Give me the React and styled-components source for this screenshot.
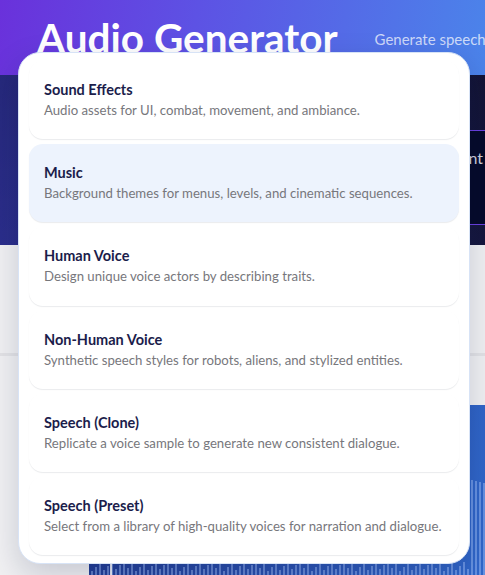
import React from 'react';
import styled, { createGlobalStyle } from 'styled-components';

const GlobalStyle = createGlobalStyle`
  html, body {
    margin: 0;
    padding: 0;
    background: #f1f1f3;
    font-family: Lato, "Open Sans", sans-serif;
  }
`;

const Page = styled.div`
  position: relative;
  width: 485px;
  height: 575px;
  overflow: hidden;
  background: #f1f1f3;
`;

const Header = styled.header`
  display: flex;
  align-items: center;
  height: 75px;
  padding-left: 37px;
  box-sizing: border-box;
  background: linear-gradient(100deg, #6a31db 0%, #5d52e4 40%, #4b84ea 100%);
  white-space: nowrap;
`;

const Title = styled.h1`
  margin: 4px 22px 4px 0;
  font-size: 40.5px;
  font-weight: 700;
  color: #ffffff;
`;

const Divider = styled.span`
  align-self: flex-start;
  margin-top: 11px;
  width: 1px;
  height: 46px;
  background: rgba(255, 255, 255, 0.35);
`;

const Subtitle = styled.span`
  margin: 3px 0 0 15px;
  font-size: 15px;
  color: rgba(255, 255, 255, 0.72);
`;

const Band = styled.section`
  display: flex;
  justify-content: flex-end;
  height: 170px;
  padding: 55px 0 0;
  box-sizing: border-box;
  background: linear-gradient(to bottom, rgba(0, 0, 0, 0.12), rgba(0, 0, 0, 0)),
    linear-gradient(to right, #2b2e8c 0%, #1d1f5a 70%, #15163c 100%);
`;

const Tile = styled.div`
  display: flex;
  justify-content: flex-end;
  width: 220px;
  height: 95px;
  margin-right: -2px;
  padding: 17px 4px 0 0;
  box-sizing: border-box;
  border-top: 1px solid #6b41e2;
  border-bottom: 1px solid #6b41e2;
  background: #060a2a;
  color: #cfd0dc;
  font-size: 16px;
`;

const Content = styled.section`
  padding-top: 108px;
`;

const Rule = styled.div`
  height: 3px;
  background: #e3e3e6;
`;

const Lower = styled.div`
  display: grid;
  grid-template-columns: 89px 1fr;
  padding-top: 49px;
`;

const Panel = styled.div`
  position: relative;
  display: flex;
  align-items: flex-end;
  height: 170px;
  background: linear-gradient(100deg, #213b92 0%, #2b55b5 60%, #3168cb 100%);
`;

const Playhead = styled.span`
  position: absolute;
  left: 21px;
  top: 0;
  bottom: 0;
  width: 2px;
  background: rgba(255, 255, 255, 0.85);
`;

const Menu = styled.div`
  position: absolute;
  left: 18px;
  top: 52px;
  width: 452px;
  height: 512px;
  box-sizing: border-box;
  padding: 8px 10px;
  display: flex;
  flex-direction: column;
  gap: 5px;
  background: #ffffff;
  border: 1px solid #d7e3f6;
  border-radius: 22px;
  box-shadow: 0 12px 32px rgba(10, 20, 60, 0.18);
`;

const Option = styled.div`
  height: 79px;
  box-sizing: border-box;
  padding: 19px 15px 0;
  border-radius: 14px;
  background: ${({ $active }) => ($active ? '#edf3fd' : '#ffffff')};
  box-shadow: 0 1px 1px rgba(20, 30, 60, 0.09);
`;

const OptionTitle = styled.div`
  font-size: 14.5px;
  line-height: 20px;
  font-weight: 700;
  color: #1b1d4b;
`;

const OptionText = styled.div`
  font-size: 13.2px;
  line-height: 20px;
  color: #77777c;
`;

const options = [
  ['Sound Effects', 'Audio assets for UI, combat, movement, and ambiance.'],
  ['Music', 'Background themes for menus, levels, and cinematic sequences.'],
  ['Human Voice', 'Design unique voice actors by describing traits.'],
  ['Non-Human Voice', 'Synthetic speech styles for robots, aliens, and stylized entities.'],
  ['Speech (Clone)', 'Replicate a voice sample to generate new consistent dialogue.'],
  ['Speech (Preset)', 'Select from a library of high-quality voices for narration and dialogue.'],
];

const bars = Array.from({ length: 99 }, (_, i) => {
  const x = 2 + i * 4;
  const base = 4 + ((i * 37) % 11);
  const h = x > 378 ? 92 + ((i * 13) % 14) : base;
  return { x, h };
});

const Wave = () => (
  <svg width="396" height="120" viewBox="0 0 396 120">
    {bars.map(({ x, h }) => (
      <rect key={x} x={x} y={120 - h} width="2" height={h} fill="rgba(170, 200, 255, 0.45)" />
    ))}
  </svg>
);

const App = () => {
  return (
    <Page>
      <GlobalStyle />
      <Header>
        <Title>Audio Generator</Title>
        <Divider />
        <Subtitle>Generate speech, music and sound effects</Subtitle>
      </Header>
      <Band>
        <Tile>Ambient</Tile>
      </Band>
      <Content>
        <Rule />
        <Lower>
          <div />
          <Panel>
            <Wave />
            <Playhead />
          </Panel>
        </Lower>
      </Content>
      <Menu>
        {options.map(([title, text]) => (
          <Option key={title} $active={title === 'Music'}>
            <OptionTitle>{title}</OptionTitle>
            <OptionText>{text}</OptionText>
          </Option>
        ))}
      </Menu>
    </Page>
  );
};

export default App;
